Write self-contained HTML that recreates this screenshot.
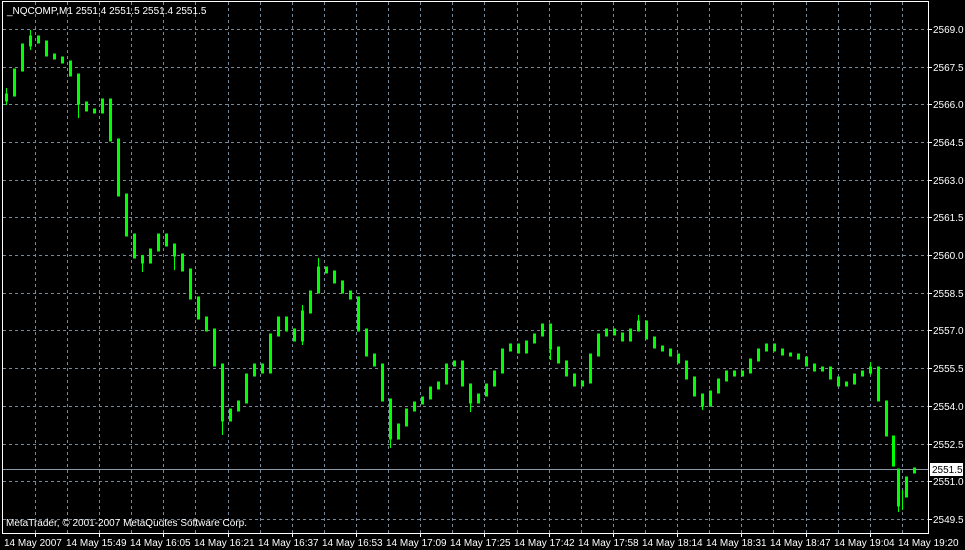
<!DOCTYPE html>
<html><head><meta charset="utf-8"><style>
html,body{margin:0;padding:0;background:#000;}
body{width:965px;height:550px;overflow:hidden;position:relative;}
svg{position:absolute;left:0;top:0;}
</style></head><body>
<svg width="965" height="550" xmlns="http://www.w3.org/2000/svg" font-family="Liberation Sans, sans-serif" font-size="10" fill="#fff">
<path stroke="#778899" stroke-dasharray="3,3" fill="none" d="M35.5 2V533M67.5 2V533M99.5 2V533M131.5 2V533M163.5 2V533M195.5 2V533M228.5 2V533M260.5 2V533M292.5 2V533M324.5 2V533M356.5 2V533M388.5 2V533M420.5 2V533M452.5 2V533M484.5 2V533M517.5 2V533M549.5 2V533M581.5 2V533M613.5 2V533M645.5 2V533M677.5 2V533M709.5 2V533M741.5 2V533M773.5 2V533M806.5 2V533M838.5 2V533M870.5 2V533M902.5 2V533
M3 29.5H928M3 67.5H928M3 104.5H928M3 142.5H928M3 180.5H928M3 217.5H928M3 255.5H928M3 293.5H928M3 330.5H928M3 368.5H928M3 406.5H928M3 444.5H928M3 481.5H928M3 519.5H928"/>
<path stroke="#fff" fill="none" d="M35.5 533v4M99.5 533v4M163.5 533v4M228.5 533v4M292.5 533v4M356.5 533v4M420.5 533v4M484.5 533v4M549.5 533v4M613.5 533v4M677.5 533v4M741.5 533v4M806.5 533v4M870.5 533v4
M928 29.5h4M928 67.5h4M928 104.5h4M928 142.5h4M928 180.5h4M928 217.5h4M928 255.5h4M928 293.5h4M928 330.5h4M928 368.5h4M928 406.5h4M928 444.5h4M928 481.5h4M928 519.5h4"/>
<line x1="3" y1="469.5" x2="928" y2="469.5" stroke="#8899aa"/>
<path stroke="#00ff00" stroke-width="3" stroke-linecap="square" fill="none" d="M6.5 100V95M14.5 95V70M22.5 70V45M30.5 45V37M38.5 37V42M46.5 42V55M54.5 55V58M62.5 58V62M70.5 62V75M78.5 75V103M86.5 103V110M94.5 110V112M102.5 112V100M110.5 100V140M118.5 140V195M126.5 195V235M134.5 235V257M142.5 257V262M150.5 262V250M158.5 250V235M166.5 235V245M174.5 245V255M182.5 255V270M190.5 270V298M198.5 298V318M206.5 318V330M214.5 330V365M222.5 365V420M230.5 420V410M238.5 410V402M246.5 402V375M254.5 375V365M262.5 365V372M270.5 372V335M278.5 335V318M286.5 318V330M294.5 330V340M302.5 340V312M310.5 312V292M318.5 292V268M326.5 268V272M334.5 272V282M342.5 282V292M350.5 292V298M358.5 298V330M366.5 330V355M374.5 355V365M382.5 365V400M390.5 400V438M398.5 438V425M406.5 425V410M414.5 410V403M422.5 403V398M430.5 398V388M438.5 388V383M446.5 383V365M454.5 365V362M462.5 362V385M470.5 385V402M478.5 402V395M486.5 395V385M494.5 385V372M502.5 372V350M510.5 350V345M518.5 345V352M526.5 352V342M534.5 342V335M542.5 335V325M550.5 325V348M558.5 348V362M566.5 362V375M574.5 375V385M582.5 385V382M590.5 382V355M598.5 355V335M606.5 335V330M614.5 330V334M622.5 334V340M630.5 340V330M638.5 330V322M646.5 322V338M654.5 338V347M662.5 347V350M670.5 350V355M678.5 355V362M686.5 362V378M694.5 378V395M702.5 395V405M710.5 405V392M718.5 392V380M726.5 380V372M734.5 372V375M742.5 375V372M750.5 372V360M758.5 360V350M766.5 350V345M774.5 345V350M782.5 350V354M790.5 354V355M798.5 355V358M806.5 358V365M814.5 365V370M822.5 370V368M830.5 368V378M838.5 378V385M846.5 385V383M854.5 383V375M862.5 375V372M870.5 372V368M878.5 400V368M886.5 435V402M893.5 465V437M898.5 505V470M906.5 496V478M914.5 472V469"/>
<path stroke="#00ff00" fill="none" d="M6.5 88V105M30.5 30V50M78.5 95V118M142.5 255V272M174.5 250V270M222.5 410V435M302.5 305V345M318.5 258V275M390.5 430V448M470.5 395V412M550.5 340V360M638.5 315V330M702.5 398V410M870.5 362V375M898.5 498V512M902.5 490V510"/>
<rect x="2.5" y="1.5" width="926" height="532" fill="none" stroke="#fff"/>
<g>
<text x="933" y="33">2569.0</text><text x="933" y="71">2567.5</text><text x="933" y="108">2566.0</text><text x="933" y="146">2564.5</text><text x="933" y="184">2563.0</text><text x="933" y="221">2561.5</text><text x="933" y="259">2560.0</text><text x="933" y="297">2558.5</text><text x="933" y="334">2557.0</text><text x="933" y="372">2555.5</text><text x="933" y="410">2554.0</text><text x="933" y="448">2552.5</text><text x="933" y="485">2551.0</text><text x="933" y="523">2549.5</text>
</g>
<rect x="930" y="463" width="33" height="13" fill="#fff"/><text x="932" y="473" fill="#000">2551.5</text>
<text x="7" y="14">_NQCOMP,M1  2551.4 2551.5 2551.4 2551.5</text>
<text x="6" y="526">MetaTrader, © 2001-2007 MetaQuotes Software Corp.</text>
<g>
<text x="4" y="546">14 May 2007</text><text x="66" y="546">14 May 15:49</text><text x="130" y="546">14 May 16:05</text><text x="194" y="546">14 May 16:21</text><text x="258" y="546">14 May 16:37</text><text x="322" y="546">14 May 16:53</text><text x="386" y="546">14 May 17:09</text><text x="450" y="546">14 May 17:25</text><text x="514" y="546">14 May 17:42</text><text x="578" y="546">14 May 17:58</text><text x="642" y="546">14 May 18:14</text><text x="706" y="546">14 May 18:31</text><text x="770" y="546">14 May 18:47</text><text x="834" y="546">14 May 19:04</text><text x="898" y="546">14 May 19:20</text>
</g>
</svg>
</body></html>
